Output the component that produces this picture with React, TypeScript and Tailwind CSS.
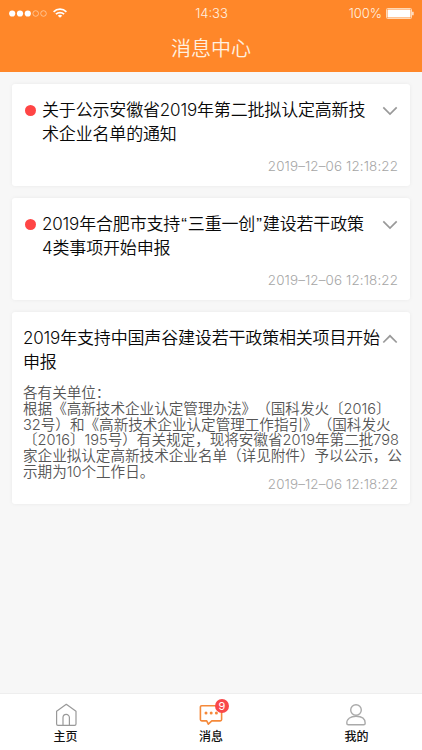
import React, { useState } from "react";

type Message = {
  title: string[];
  time: string;
  unread: boolean;
  body?: string[];
};

const messages: Message[] = [
  {
    title: ["关于公示安徽省2019年第二批拟认定高新技", "术企业名单的通知"],
    time: "2019–12–06 12:18:22",
    unread: true,
  },
  {
    title: ["2019年合肥市支持“三重一创”建设若干政策", "4类事项开始申报"],
    time: "2019–12–06 12:18:22",
    unread: true,
  },
  {
    title: ["2019年支持中国声谷建设若干政策相关项目开始", "申报"],
    time: "2019–12–06 12:18:22",
    unread: false,
    body: [
      "各有关单位：",
      "根据《高新技术企业认定管理办法》（国科发火〔2016〕",
      "32号）和《高新技术企业认定管理工作指引》（国科发火",
      "〔2016〕195号）有关规定，现将安徽省2019年第二批798",
      "家企业拟认定高新技术企业名单（详见附件）予以公示，公",
      "示期为10个工作日。",
    ],
  },
];

function Arrow({ open }: { open: boolean }) {
  return (
    <svg className="h-[10px] w-4" viewBox="0 0 16 10" fill="none" stroke="#999" strokeWidth="1.7">
      <path d={open ? "M1.3 8.5 8 1.8l6.7 6.7" : "M1.3 1.3 8 8l6.7-6.7"} />
    </svg>
  );
}

function StatusBar() {
  return (
    <div className="grid h-[26px] grid-cols-3 items-center pl-[9px] pr-2 text-[13px] text-[#fff1e0]">
      <div className="flex items-center">
        <svg className="h-[7px] w-[39px]" viewBox="0 0 39 7">
          <g fill="#fff">
            <circle cx="3.2" cy="3.5" r="3.1" />
            <circle cx="11" cy="3.5" r="3.1" />
            <circle cx="18.8" cy="3.5" r="3.1" />
          </g>
          <g fill="none" stroke="#ffd9b5" strokeWidth="0.7">
            <circle cx="26.7" cy="3.5" r="2.8" />
            <circle cx="34.5" cy="3.5" r="2.8" />
          </g>
        </svg>
        <svg className="ml-[5px] h-[10px] w-[14px]" viewBox="0 0 14 10" fill="none" stroke="#fff" strokeWidth="1.7">
          <path d="M.6 3.8a9.2 9.2 0 0 1 12.8 0M2.9 6.2a5.9 5.9 0 0 1 8.2 0" />
          <path d="M7 9.8 4.8 7.7a3.2 3.2 0 0 1 4.4 0z" fill="#fff" stroke="none" />
        </svg>
      </div>
      <div className="pt-px text-center font-[350]">14:33</div>
      <div className="flex items-center justify-end gap-1">
        <span className="pt-px font-[350]">100%</span>
        <svg className="h-[11px] w-7" viewBox="0 0 28 11">
          <rect x=".5" y=".5" width="25" height="10" rx="1" fill="none" stroke="#ffd9b5" />
          <rect x="1.5" y="1.5" width="23" height="8" fill="#fff" />
          <path d="M26.3 3.8h1.2v3.4h-1.2z" fill="#fff" />
        </svg>
      </div>
    </div>
  );
}

// curly quotes need a little more room between CJK glyphs
function TitleLine({ text }: { text: string }) {
  return (
    <div className="h-6">
      {text.split(/([“”])/).map((part, i) =>
        part === "“" || part === "”" ? (
          <span key={i} className="px-[1.1px] font-['Liberation_Sans',sans-serif]">
            {part}
          </span>
        ) : (
          part
        )
      )}
    </div>
  );
}

function MessageCard({ item }: { item: Message }) {
  const [open, setOpen] = useState(!!item.body);

  return (
    <div
      className={`flex flex-col rounded-[3px] bg-white pl-[11px] pr-3 pt-[15px] shadow-[0_0_4px_rgba(0,0,0,0.06)] ${
        item.body ? "h-[192px]" : "h-[102px]"
      }`}
    >
      <div className="flex items-start" onClick={() => setOpen(!open)}>
        {item.unread && <span className="ml-[2px] mr-[6px] mt-[6px] h-[11px] w-[11px] shrink-0 rounded-full bg-[#ff4545]" />}
        <div className="-mt-px w-0 flex-1 whitespace-nowrap text-[17px] font-[350] leading-6 tracking-[-0.17px] text-[#080808]">
          {item.title.map((line) => (
            <TitleLine key={line} text={line} />
          ))}
        </div>
        <span className="mt-[7px] flex shrink-0">
          <Arrow open={open} />
        </span>
      </div>
      {item.body && open && (
        <div className="mt-3 whitespace-nowrap text-[14.6px] font-[350] leading-[15.8px] tracking-[-0.02px] text-[#555]">
          {item.body.map((line) => (
            <div key={line}>{line}</div>
          ))}
        </div>
      )}
      <div
        className={`text-right text-[13.4px] font-light leading-4 tracking-[0.13px] text-[#a6a6a6] ${
          item.body ? "-mt-[5px]" : "mt-[12px]"
        }`}
      >
        {item.time}
      </div>
    </div>
  );
}

function TabBar() {
  return (
    <div className="grid h-[57px] grid-cols-[131px_160px_131px] border-t border-[#eee] bg-white pt-[9px] text-center text-xs font-medium leading-4 text-[#111]">
      <div className="flex flex-col items-center">
        <svg className="h-6 w-6" viewBox="0 0 24 24" fill="none" stroke="#999" strokeWidth="1.2" strokeLinejoin="round">
          <path d="M2.6 8.3 12.3 1.3l9.7 7v12.6c0 .9-.5 1.4-1.4 1.4H4c-.9 0-1.4-.5-1.4-1.4z" />
          <path d="M9 22.2V14.6a3.2 3.2 0 0 1 6.4 0v7.6" />
        </svg>
        <span className="mt-[2px]">主页</span>
      </div>
      <div className="flex flex-col items-center">
        <div className="relative">
          <svg className="h-6 w-6" viewBox="0 0 24 24" fill="none" stroke="#f5893a" strokeWidth="1.6" strokeLinejoin="round">
            <path d="M2.7 2.8h18.6c.8 0 1.3.5 1.3 1.3v12.5c0 .8-.5 1.3-1.3 1.3h-8.5l-3.5 3.2-1.6-3.2h-5c-.8 0-1.3-.5-1.3-1.3V4.1c0-.8.5-1.3 1.3-1.3z" />
            <g fill="#f5893a" stroke="none">
              <circle cx="7" cy="10" r="1.5" />
              <circle cx="12.2" cy="10" r="1.5" />
              <circle cx="17.4" cy="10" r="1.5" />
            </g>
          </svg>
          <span className="absolute -right-[6px] -top-[4px] flex h-[14px] w-[14px] items-center justify-center rounded-full bg-[#f9484a] text-[11px] font-normal text-white">
            9
          </span>
        </div>
        <span className="mt-[2px]">消息</span>
      </div>
      <div className="flex flex-col items-center">
        <svg className="-ml-[2px] h-6 w-6" viewBox="0 0 24 24" fill="none" stroke="#aaa" strokeWidth="1.4">
          <circle cx="12" cy="7" r="5.3" />
          <path d="M2.8 20.3c0-4.7 4-7 9.2-7s9.2 2.3 9.2 7c0 1-.6 1.5-1.5 1.5H4.3c-.9 0-1.5-.5-1.5-1.5z" />
        </svg>
        <span className="mt-[2px]">我的</span>
      </div>
    </div>
  );
}

export default function App() {
  return (
    <div className="flex h-[750px] w-[422px] flex-col overflow-hidden bg-[#f7f7f7] font-['Inter','Noto_Sans_CJK_SC',sans-serif] [text-spacing-trim:space-all]">
      <header className="h-[72px] bg-[#ff8729]">
        <StatusBar />
        <h1 className="pt-[8px] text-center text-[20px] font-[350] leading-[30px] text-[#fff1e0]">消息中心</h1>
      </header>
      <main className="flex flex-1 flex-col gap-3 px-3 pt-3">
        {messages.map((item, i) => (
          <MessageCard key={i} item={item} />
        ))}
      </main>
      <TabBar />
    </div>
  );
}
